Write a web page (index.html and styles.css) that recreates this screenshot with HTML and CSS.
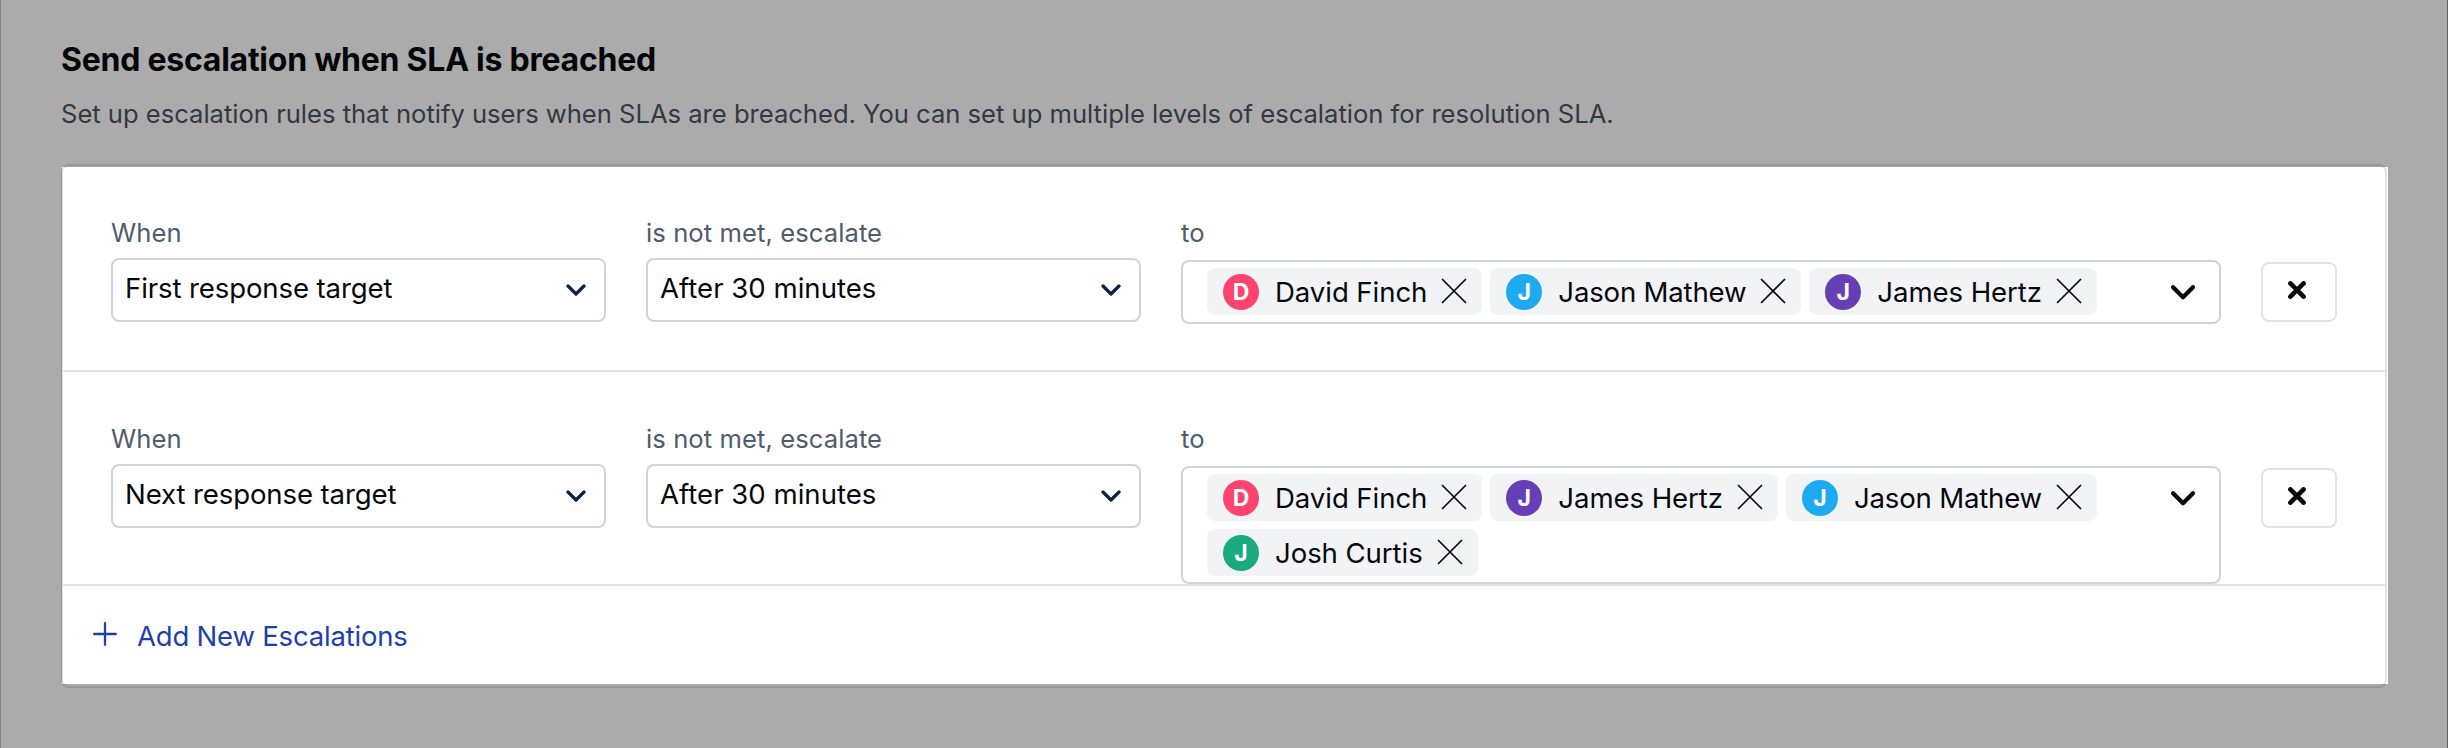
FILE: index.html
```
<!DOCTYPE html>
<html lang="en">
<head>
<meta charset="utf-8">
<title>SLA escalations</title>
<link rel="stylesheet" href="styles.css">
</head>
<body>
<svg class="sprite" aria-hidden="true">
  <symbol id="remove" viewBox="0 0 26 26"><path d="M1.5 1.5 24.5 24.5M24.5 1.5 1.5 24.5" fill="none" stroke="currentColor" stroke-width="1.7" stroke-linecap="round"/></symbol>
  <symbol id="chevron" viewBox="0 0 20 12"><path d="M2 2 10 10 18 2" fill="none" stroke="currentColor" stroke-width="3.2" stroke-linecap="round" stroke-linejoin="round"/></symbol>
  <symbol id="chevron-bold" viewBox="0 0 24 15"><path d="M2.1 2.2 12 12.2 21.9 2.2" fill="none" stroke="currentColor" stroke-width="4.2" stroke-linecap="round" stroke-linejoin="round"/></symbol>
  <symbol id="close" viewBox="0 0 18 18"><path d="M2.4 2.4 15.6 15.6M15.6 2.4 2.4 15.6" fill="none" stroke="currentColor" stroke-width="4.6" stroke-linecap="round"/></symbol>
  <symbol id="plus" viewBox="0 0 24 24"><path d="M12 1.2V22.8M1.2 12H22.8" fill="none" stroke="currentColor" stroke-width="2.3" stroke-linecap="round"/></symbol>
</svg>
<main class="page">
  <h1 class="title">Send escalation when SLA is breached</h1>
  <p class="description">Set up escalation rules that notify users when SLAs are breached. You can set up multiple levels of escalation for resolution SLA.</p>
  <section class="panel">
    <div class="rule rule-first">
      <div class="field">
        <span class="label">When</span>
        <div class="select"><span class="target">First response target</span><svg class="chevron"><use href="#chevron"/></svg></div>
      </div>
      <div class="field">
        <span class="label">is not met, escalate</span>
        <div class="select"><span>After 30 minutes</span><svg class="chevron"><use href="#chevron"/></svg></div>
      </div>
      <div class="field field-users">
        <span class="label">to</span>
        <div class="users">
          <div class="chips">
            <span class="chip"><b class="avatar pink">D</b><span class="name">David Finch</span><svg class="remove"><use href="#remove"/></svg></span>
            <span class="chip"><b class="avatar blue">J</b><span class="name name-tight">Jason Mathew</span><svg class="remove"><use href="#remove"/></svg></span>
            <span class="chip"><b class="avatar purple">J</b><span class="name">James Hertz</span><svg class="remove"><use href="#remove"/></svg></span>
          </div>
          <svg class="chevron-bold"><use href="#chevron-bold"/></svg>
        </div>
      </div>
      <button class="delete" aria-label="Delete"><svg class="close"><use href="#close"/></svg></button>
    </div>
    <div class="rule rule-second">
      <div class="field">
        <span class="label">When</span>
        <div class="select"><span class="target">Next response target</span><svg class="chevron"><use href="#chevron"/></svg></div>
      </div>
      <div class="field">
        <span class="label">is not met, escalate</span>
        <div class="select"><span>After 30 minutes</span><svg class="chevron"><use href="#chevron"/></svg></div>
      </div>
      <div class="field field-users">
        <span class="label">to</span>
        <div class="users">
          <div class="chips">
            <span class="chip"><b class="avatar pink">D</b><span class="name">David Finch</span><svg class="remove"><use href="#remove"/></svg></span>
            <span class="chip"><b class="avatar purple">J</b><span class="name">James Hertz</span><svg class="remove"><use href="#remove"/></svg></span>
            <span class="chip"><b class="avatar blue">J</b><span class="name name-tight">Jason Mathew</span><svg class="remove"><use href="#remove"/></svg></span>
            <span class="chip"><b class="avatar green">J</b><span class="name">Josh Curtis</span><svg class="remove"><use href="#remove"/></svg></span>
          </div>
          <svg class="chevron-bold"><use href="#chevron-bold"/></svg>
        </div>
      </div>
      <button class="delete" aria-label="Delete"><svg class="close"><use href="#close"/></svg></button>
    </div>
    <a class="add"><svg class="plus"><use href="#plus"/></svg><span>Add New Escalations</span></a>
    <div class="spotlight"></div>
  </section>
</main>
</body>
</html>
```
FILE: styles.css
```
* { box-sizing: border-box; }
html, body { margin: 0; overflow: hidden; }
body { font-family: Inter, "Liberation Sans", sans-serif; color: #06080e; background: #fff; }
svg { display: block; flex: none; }
.sprite { display: none; }

.page { height: 748px; padding: 40px 60px 0; border-left: 1px solid #bfbfbf; border-right: 1px solid #93939e; }
.title { margin: 0 0 18px; font-size: 32px; line-height: 40px; font-weight: 700; letter-spacing: -.25px; }
.description { margin: 0 0 34px; font-size: 25.6px; line-height: 32px; letter-spacing: -.015px; color: #4b5666; white-space: nowrap; }

.panel { position: relative; width: 2326px; height: 524px; border: 2px solid #e1e1e7; border-radius: 8px; background: #fff; }
/* Dims everything outside the highlighted panel. */
.spotlight { position: absolute; left: -1px; right: -3px; top: 1px; bottom: 2px; box-shadow: 0 0 0 3000px rgba(0, 0, 0, .33); pointer-events: none; }

.rule { display: flex; align-items: flex-start; gap: 40px; padding: 52px 0 0 48px; border-bottom: 2px solid #e1e1e7; }
.rule-first { height: 206px; }
.rule-second { height: 214px; }
.field { display: flex; flex-direction: column; gap: 10px; width: 495px; }
.field-users { width: 1040px; gap: 12px; }
.label { font-size: 25.6px; line-height: 30px; letter-spacing: .08px; color: #505b6b; }
.select { display: flex; align-items: center; justify-content: space-between; height: 64px; padding: 0 18px 0 12px; border: 2px solid #d0d3db; border-radius: 8px; font-size: 27.6px; line-height: 36px; }
.select span { padding-bottom: 4px; }
.select .target { letter-spacing: -.13px; }
.chevron { width: 20px; height: 12px; color: #0b2147; }

.users { display: flex; align-items: flex-start; justify-content: space-between; min-height: 64px; padding: 6px 24px 6px 24px; border: 2px solid #d0d3db; border-radius: 8px; }
.chips { display: flex; flex-wrap: wrap; gap: 8px; width: 900px; }
.chip { display: flex; align-items: center; height: 47px; padding: 0 15px 0 16px; border-radius: 8px; background: #f2f3f5; font-size: 27.6px; line-height: 36px; }
.avatar { display: flex; align-items: center; justify-content: center; width: 36px; height: 36px; border-radius: 50%; color: #fff; font-size: 23px; line-height: 36px; font-weight: 700; }
.name { margin: 1px 14px 0 16px; letter-spacing: -.08px; }
.name-tight { letter-spacing: -.2px; }
.remove { width: 26px; height: 26px; margin-top: -1px; }
.chevron-bold { width: 24px; height: 15px; margin-top: 17px; }
.pink { background: #ff436f; }
.blue { background: #1eaaf1; }
.purple { background: #673fb4; }
.green { background: #1aaa7f; }

.delete { display: flex; align-items: center; justify-content: center; width: 76px; height: 60px; margin-top: 44px; padding: 0 4px 4px 0; border: 2px solid #e1e1e7; border-radius: 8px; background: #fff; color: #06080e; }
.close { width: 18px; height: 18px; }

.add { display: flex; align-items: center; gap: 20px; height: 100px; padding-left: 30px; color: #1f3fad; font-size: 27.5px; line-height: 36px; letter-spacing: -.2px; }
.plus { width: 24px; height: 24px; margin-top: -4px; }
```
